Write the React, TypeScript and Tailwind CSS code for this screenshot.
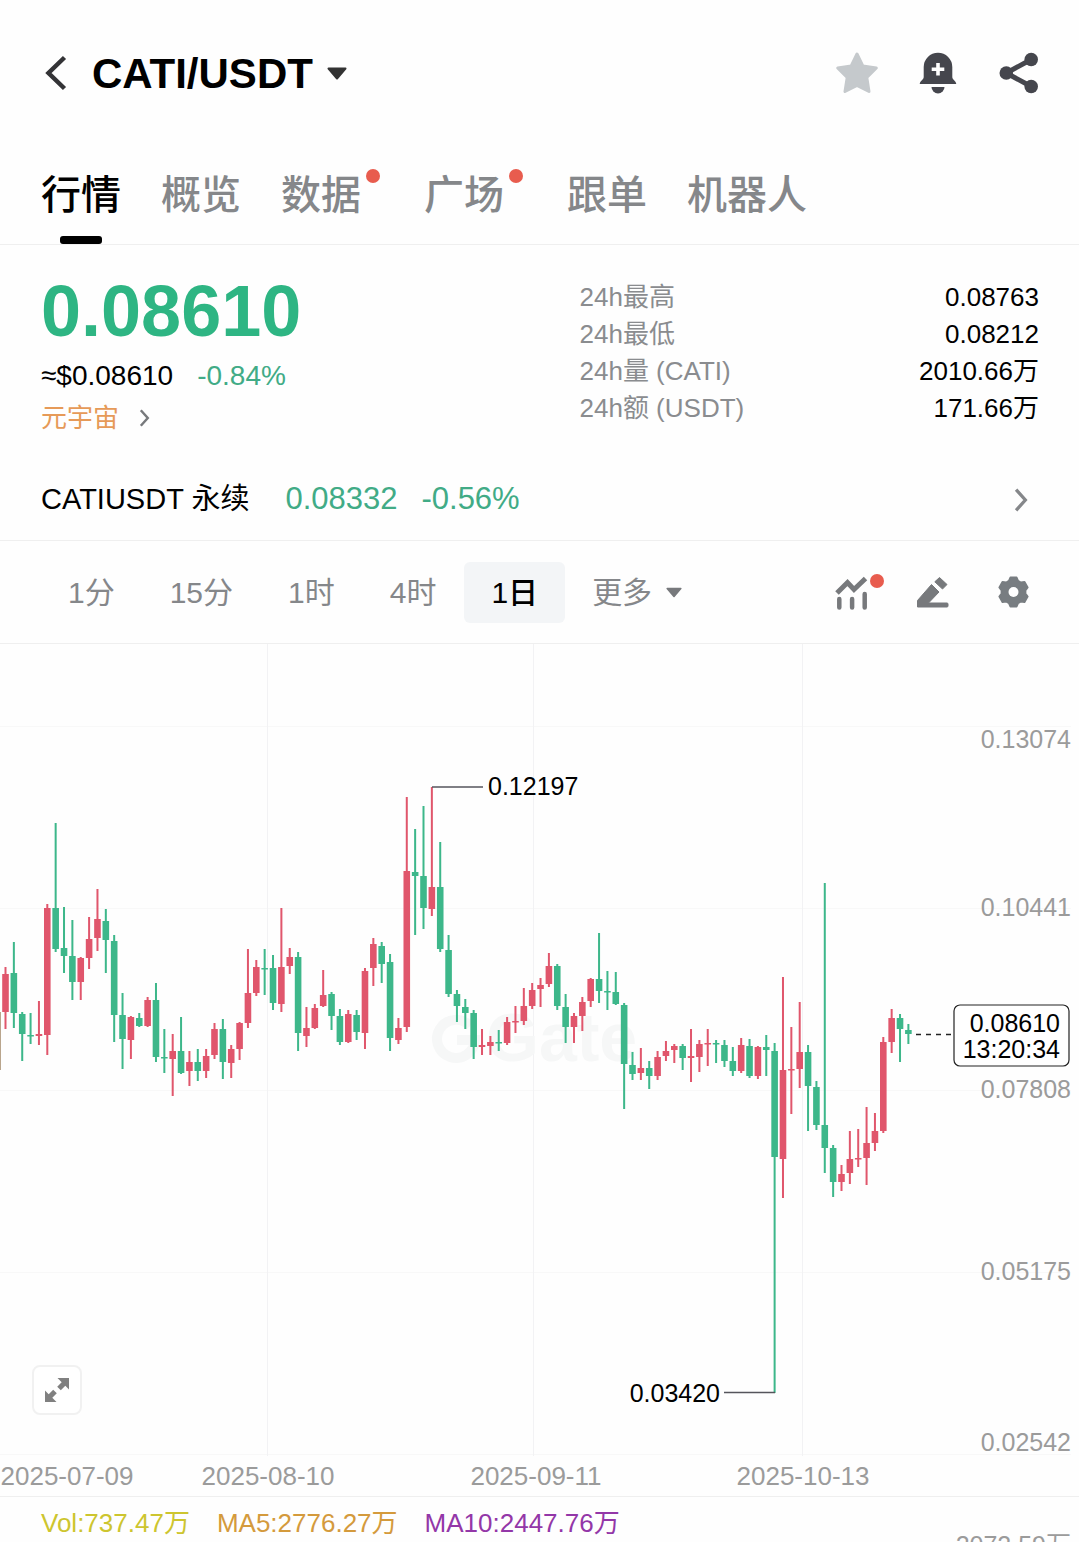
import React, { useState } from 'react';

// [direction, high, body top, body bottom, low] in plot units
type Candle = ['u' | 'd', number, number, number, number];

const CANDLES: Candle[] = [
  ['u', 967, 974, 1012, 1029], ['d', 942, 973, 1013, 1028], ['d', 1012, 1014, 1034, 1061], ['d', 1013, 1035, 1036, 1044],
  ['u', 1001, 1034, 1036, 1045], ['u', 904, 908, 1035, 1055], ['d', 823, 908, 949, 952], ['d', 907, 948, 956, 973],
  ['d', 920, 956, 982, 1000], ['u', 957, 958, 982, 1000], ['u', 917, 939, 958, 969], ['u', 889, 919, 938, 951],
  ['d', 909, 921, 940, 973], ['d', 935, 941, 1015, 1042], ['d', 993, 1015, 1039, 1069], ['u', 1016, 1017, 1040, 1059],
  ['d', 1013, 1018, 1026, 1027], ['u', 997, 1000, 1026, 1027], ['d', 983, 1000, 1057, 1062], ['d', 1029, 1057, 1058, 1073],
  ['u', 1034, 1051, 1059, 1096], ['d', 1017, 1051, 1073, 1074], ['u', 1051, 1062, 1071, 1086], ['d', 1049, 1062, 1071, 1081],
  ['u', 1049, 1056, 1071, 1078], ['u', 1023, 1029, 1055, 1059], ['d', 1019, 1029, 1062, 1079], ['u', 1045, 1049, 1063, 1078],
  ['u', 1022, 1023, 1049, 1060], ['u', 949, 993, 1023, 1028], ['u', 960, 967, 993, 996], ['d', 949, 968, 969, 995],
  ['d', 955, 968, 1003, 1010], ['u', 908, 967, 1004, 1012], ['u', 948, 957, 966, 974], ['d', 952, 957, 1033, 1051],
  ['u', 1007, 1028, 1036, 1047], ['u', 1004, 1008, 1028, 1029], ['u', 970, 995, 1006, 1007], ['d', 992, 994, 1016, 1030],
  ['d', 1009, 1016, 1042, 1045], ['u', 1010, 1014, 1042, 1043], ['d', 1010, 1015, 1032, 1040], ['u', 968, 971, 1033, 1049],
  ['u', 938, 944, 968, 986], ['d', 942, 946, 964, 983], ['d', 954, 962, 1038, 1051], ['u', 1018, 1028, 1040, 1044],
  ['u', 797, 871, 1027, 1032], ['d', 829, 872, 876, 935], ['d', 806, 876, 908, 929], ['u', 787, 887, 909, 916],
  ['d', 842, 887, 949, 952], ['d', 935, 950, 994, 997], ['d', 990, 994, 1006, 1022], ['d', 999, 1007, 1013, 1029],
  ['d', 1010, 1013, 1047, 1059], ['u', 1029, 1045, 1047, 1055], ['u', 1036, 1042, 1046, 1055], ['d', 1030, 1042, 1043, 1051],
  ['u', 1017, 1022, 1043, 1045], ['u', 1006, 1021, 1022, 1033], ['u', 988, 1006, 1021, 1025], ['u', 983, 990, 1006, 1009],
  ['u', 978, 985, 989, 1007], ['u', 953, 966, 984, 987], ['d', 964, 966, 1006, 1010], ['d', 994, 1007, 1027, 1043],
  ['u', 1013, 1016, 1027, 1043], ['u', 997, 1002, 1016, 1031], ['u', 978, 979, 1001, 1007], ['d', 933, 979, 991, 1003],
  ['d', 971, 991, 992, 1010], ['d', 972, 992, 1004, 1005], ['d', 1003, 1005, 1064, 1109], ['d', 1052, 1065, 1074, 1080],
  ['u', 1048, 1068, 1073, 1080], ['d', 1061, 1068, 1076, 1089], ['u', 1051, 1057, 1076, 1080], ['u', 1041, 1051, 1056, 1061],
  ['u', 1044, 1046, 1050, 1063], ['d', 1044, 1046, 1058, 1070], ['u', 1029, 1056, 1058, 1082], ['u', 1040, 1044, 1057, 1072],
  ['u', 1029, 1043, 1044, 1066], ['d', 1040, 1043, 1044, 1063], ['d', 1040, 1045, 1061, 1067], ['d', 1047, 1061, 1071, 1076],
  ['u', 1038, 1045, 1071, 1073], ['d', 1039, 1046, 1076, 1078], ['u', 1046, 1047, 1076, 1079], ['d', 1035, 1047, 1050, 1076],
  ['d', 1043, 1051, 1157, 1393], ['u', 977, 1070, 1159, 1198], ['u', 1027, 1069, 1070, 1114], ['u', 1002, 1052, 1069, 1088],
  ['d', 1045, 1052, 1086, 1131], ['d', 1081, 1087, 1125, 1130], ['d', 883, 1125, 1148, 1173], ['d', 1145, 1148, 1182, 1197],
  ['u', 1165, 1174, 1182, 1191], ['u', 1131, 1159, 1173, 1184], ['u', 1129, 1158, 1159, 1167], ['u', 1107, 1143, 1158, 1185],
  ['u', 1113, 1131, 1143, 1151], ['u', 1037, 1042, 1131, 1133], ['u', 1009, 1018, 1042, 1053], ['d', 1014, 1018, 1029, 1062],
  ['d', 1024, 1030, 1034, 1044],
];

const COLORS = { u: '#e0566c', d: '#3db78a' };

const TABS = [
  { label: '行情' },
  { label: '概览' },
  { label: '数据', dot: true },
  { label: '广场', dot: true },
  { label: '跟单' },
  { label: '机器人' },
];

const STATS = [
  ['24h最高', '0.08763'],
  ['24h最低', '0.08212'],
  ['24h量 (CATI)', '2010.66万'],
  ['24h额 (USDT)', '171.66万'],
];

const INTERVALS = ['1分', '15分', '1时', '4时', '1日'];

const PRICE_AXIS: [string, number][] = [
  ['0.13074', 739],
  ['0.10441', 907],
  ['0.07808', 1089],
  ['0.05175', 1271],
  ['0.02542', 1442],
];

const DATE_AXIS: [string, number][] = [
  ['2025-07-09', 67],
  ['2025-08-10', 268],
  ['2025-09-11', 536],
  ['2025-10-13', 803],
];

const Chevron: React.FC<{ className: string }> = ({ className }) => (
  <svg viewBox="0 0 12 22" className={className} fill="none" stroke="currentColor" strokeWidth="3">
    <path d="M1.5 1.5 10 11l-8.500 9.500" />
  </svg>
);

const Caret: React.FC<{ className: string }> = ({ className }) => (
  <svg viewBox="0 0 20 13" className={className} fill="currentColor" stroke="currentColor" strokeWidth="2" strokeLinejoin="round">
    <path d="M1.500 1.500h17L10 11.500z" />
  </svg>
);

const GearIcon = () => {
  const points: string[] = [];
  for (let i = 0; i < 6; i++) {
    [[-12, 14.8], [12, 14.8], [22, 12], [38, 12]].forEach(([offset, radius]) => {
      const angle = ((i * 60 - 90 + offset) * Math.PI) / 180;
      points.push(`${(20.5 + radius * Math.cos(angle)).toFixed(2)},${(20 + radius * Math.sin(angle)).toFixed(2)}`);
    });
  }
  return (
    <svg viewBox="0 0 40 40" className="size-10">
      <polygon points={points.join(' ')} fill="#787d81" stroke="#787d81" strokeWidth="2" strokeLinejoin="round" />
      <circle cx="20.500" cy="20" r="5" fill="#fff" />
    </svg>
  );
};

const Header = () => (
  <header className="flex h-[146px] items-center px-[38px]">
    <button aria-label="返回">
      <svg viewBox="0 0 40 44" className="h-11 w-10" fill="none" stroke="#333336" strokeWidth="4.500">
        <path d="M26.500 6.500 10.500 22l16 15.500" />
      </svg>
    </button>
    <button className="ml-[14px] flex items-center gap-[14px] text-black">
      <h1 className="text-[42px] font-bold">CATI/USDT</h1>
      <Caret className="h-[13px] w-5 text-[#333]" />
    </button>
    <div className="ml-auto flex gap-[37px]">
      <button aria-label="收藏">
        <svg viewBox="0 0 44 44" className="size-11" fill="#c5c9cc" stroke="#c5c9cc" strokeWidth="3" strokeLinejoin="round">
          <path d="M22 3l5.800 12 13.500 2-9.500 9.500 2.200 14L22 34.500 10 40.500l2.200-14-9.500-9.500 13.500-2z" />
        </svg>
      </button>
      <button aria-label="价格提醒">
        <svg viewBox="0 0 44 44" className="size-11" fill="#45464d">
          <path d="M7.700 16a14.300 14.300 0 0 1 28.600 0v10c0 2.500 3.500 3.500 4 7H3.700c.5-3.500 4-4.500 4-7z" />
          <path d="M15.500 36h13a6.500 6.500 0 0 1-13 0z" />
          <path d="M20.200 12h3.600v4.500h4.500v3.600h-4.500v4.500h-3.600v-4.500h-4.500v-3.600h4.500z" fill="#fff" />
        </svg>
      </button>
      <button aria-label="分享">
        <svg viewBox="0 0 44 44" className="size-11" fill="#45464d">
          <path d="M34.200 8.500 9.300 22l24.900 13.500" fill="none" stroke="#45464d" strokeWidth="5" />
          <circle cx="9.300" cy="22" r="6.800" />
          <circle cx="34.200" cy="8.500" r="6.800" />
          <circle cx="34.200" cy="35.500" r="6.800" />
        </svg>
      </button>
    </div>
  </header>
);

const TabBar = () => {
  const [active, setActive] = useState('行情');
  return (
    <nav className="flex h-[99px] gap-10 border-b border-[#efefef] px-[41px]">
      {TABS.map((tab) => (
        <button
          key={tab.label}
          onClick={() => setActive(tab.label)}
          className={`relative flex items-center text-[40px] font-medium ${tab.dot ? 'pr-[23px]' : ''} ${
            active === tab.label ? 'text-black' : 'text-[#85878a]'
          }`}
        >
          {tab.label}
          {tab.dot && <span className="absolute top-[23px] right-1 size-[14px] rounded-full bg-[#e85c4e]" />}
          {active === tab.label && (
            <span className="absolute bottom-0 left-1/2 h-2 w-[42px] -translate-x-1/2 rounded-[3px] bg-black" />
          )}
        </button>
      ))}
    </nav>
  );
};

const Summary = () => (
  <section className="grid grid-cols-2 pt-8">
    <div className="px-[41px]">
      <div className="text-[72px] leading-[68px] font-bold text-[#2eb583]">0.08610</div>
      <div className="mt-[10px] flex gap-6 text-[28px] leading-[42px]">
        <span className="text-black">≈$0.08610</span>
        <span className="text-[#41ab86]">-0.84%</span>
      </div>
      <a href="#metaverse" className="flex items-center gap-5 text-[26px] leading-[42px] text-[#e69a58]">
        元宇宙
        <Chevron className="h-[18px] w-[11px] text-[#77797c]" />
      </a>
    </div>
    <dl className="flex flex-col px-10 pt-[2px] text-[26px] leading-[37px]">
      {STATS.map(([label, value]) => (
        <div key={label} className="flex justify-between">
          <dt className="text-[#8a8c8f]">{label}</dt>
          <dd className="text-black">{value}</dd>
        </div>
      ))}
    </dl>
  </section>
);

const PerpetualRow = () => (
  <a href="#perpetual" className="mt-5 flex h-[82px] items-center border-b border-[#efefef] pr-[50px] pl-[41px] text-[31px]">
    <span className="text-[29px] text-black">CATIUSDT 永续</span>
    <span className="ml-9 text-[#41ab86]">0.08332</span>
    <span className="ml-6 text-[#41ab86]">-0.56%</span>
    <Chevron className="ml-auto h-6 w-4 text-[#85878a]" />
  </a>
);

const Toolbar = () => {
  const [interval, setInterval] = useState('1日');
  return (
    <div className="flex h-[103px] items-center border-b border-[#efefef] pr-[46px] pl-[41px] text-[30px] text-[#85878a]">
      <div className="flex gap-px">
        {INTERVALS.map((item) => (
          <button
            key={item}
            onClick={() => setInterval(item)}
            className={`h-[61px] rounded-md px-[27px] ${interval === item ? 'bg-[#f3f5f7] font-medium text-black' : ''}`}
          >
            {item}
          </button>
        ))}
      </div>
      <button className="flex h-[61px] items-center gap-[14px] pl-[27px]">
        更多
        <Caret className="h-[11px] w-4 text-[#77797c]" />
      </button>
      <div className="ml-auto flex gap-10">
        <button aria-label="指标" className="relative">
          <svg viewBox="0 0 40 40" className="size-10" fill="none" stroke="#77797c">
            <path d="M4 21 14.500 10.500l6.500 7L32.500 6.500" strokeWidth="5" />
            <path d="M6.300 27v8.500M19.100 27v8.500M31.700 22v13.500" strokeWidth="4.500" strokeLinecap="round" />
          </svg>
          <span className="absolute top-[2px] -right-[11px] size-[14px] rounded-full bg-[#e85c4e]" />
        </button>
        <button aria-label="画线">
          <svg viewBox="0 0 40 40" className="size-10" fill="#77797c" stroke="#77797c" strokeWidth="1" strokeLinejoin="round">
            <path d="M18.500 12.500 26 20 15.500 31H34a1 1 0 0 1 1 1v2a1 1 0 0 1-1 1H4.500v-6.500z" />
            <path d="M26.500 5.500 34 12.500 29.500 17 21.800 9.800z" />
          </svg>
        </button>
        <button aria-label="设置">
          <GearIcon />
        </button>
      </div>
    </div>
  );
};

const Chart = () => (
  <section className="relative">
    <svg viewBox="0 644 1079 852" className="block w-full" fontSize="25">
      <g stroke="#f8f8f8">
        {[726, 908, 1090, 1272, 1454].map((y) => (
          <line key={y} x1="0" x2="1071" y1={y + 0.5} y2={y + 0.5} />
        ))}
      </g>
      <g stroke="#f2f2f4">
        {[267, 533, 802].map((x) => (
          <line key={x} x1={x + 0.5} x2={x + 0.5} y1="644" y2="1456" />
        ))}
      </g>

      <g fill="#f6f7f7">
        <path d="M470 1026a19 19 0 1 0 5 14h-18" fill="none" stroke="#f6f7f7" strokeWidth="10" />
        <text x="486" y="1061" fontSize="68" fontWeight="700">Gate</text>
      </g>

      <line x1="0.500" x2="0.500" y1="1012" y2="1070" stroke="#b9a58c" />
      {CANDLES.map(([dir, high, top, bottom, low], i) => {
        const x = 5.5 + i * 8.36;
        return (
          <g key={i} fill={COLORS[dir]}>
            <rect x={x - 1} y={high} width="2" height={low - high} />
            <rect x={x - 3.3} y={top} width="6.600" height={Math.max(bottom - top, 1.5)} />
          </g>
        );
      })}

      <g fill="none" stroke="#55555c" strokeWidth="1.500">
        <path d="M432 787h51" />
        <path d="M724 1392.500h51" />
        <path d="M916 1034.500h38" strokeDasharray="5 5" stroke="#222" />
      </g>
      <g fill="#000">
        <text x="488" y="795">0.12197</text>
        <text x="720" y="1402" textAnchor="end">0.03420</text>
      </g>

      <g fill="#9b9b9b">
        {PRICE_AXIS.map(([label, y]) => (
          <text key={label} x="1071" y={y + 9} textAnchor="end">{label}</text>
        ))}
        {DATE_AXIS.map(([label, x]) => (
          <text key={label} x={x} y="1485" fontSize="26" textAnchor="middle">{label}</text>
        ))}
      </g>

      <rect x="954" y="1005" width="115" height="61" rx="6" fill="#fff" stroke="#222" strokeWidth="1.200" />
      <g fill="#000" textAnchor="end">
        <text x="1060" y="1032">0.08610</text>
        <text x="1060" y="1058">13:20:34</text>
      </g>
    </svg>
    <button
      aria-label="全屏"
      className="absolute bottom-[81px] left-8 flex size-[50px] items-center justify-center rounded-lg border-2 border-[#f1f1f1] bg-white"
    >
      <svg viewBox="0 0 24 24" className="size-6" fill="#808080">
        <path d="M12.500 0H24v11.500l-3.700-3.700-4.500 4.500-3.600-3.600 4.500-4.500z" />
        <path d="M11.500 24H0V12.500l3.700 3.700 4.500-4.500 3.600 3.600-4.500 4.500z" />
      </svg>
    </button>
  </section>
);

const VolumePanel = () => (
  <section className="relative border-t border-[#efefef]">
    <div className="flex gap-[27px] px-[41px] text-[26px] leading-[52px]">
      <span className="text-[#cdc52f]">Vol:737.47万</span>
      <span className="text-[#d49a3c]">MA5:2776.27万</span>
      <span className="text-[#9337a8]">MA10:2447.76万</span>
    </div>
    <span className="absolute top-[30px] right-2 text-[25px] leading-[36px] text-[#9b9b9b]">2072.59万</span>
  </section>
);

export default function App() {
  return (
    <main className="h-screen overflow-hidden bg-[#fefefe] font-['Liberation_Sans','Noto_Sans_CJK_SC',sans-serif]">
      <Header />
      <TabBar />
      <Summary />
      <PerpetualRow />
      <Toolbar />
      <Chart />
      <VolumePanel />
    </main>
  );
}
